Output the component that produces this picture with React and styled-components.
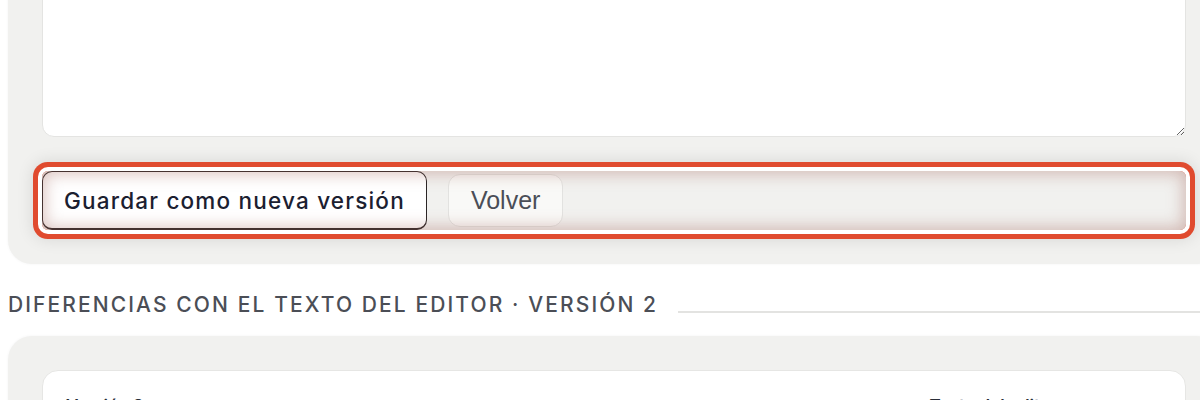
import styled, { createGlobalStyle } from "styled-components";

const GlobalStyle = createGlobalStyle`
  body {
    margin: 0;
    background: #ffffff;
    overflow: hidden;
    font-family: Inter, "Noto Sans", sans-serif;
  }
`;

export default function App() {
  return (
    <>
      <GlobalStyle />
      <Page>
        <Panel>
          <Editor defaultValue="" />
          <Actions>
            <PrimaryButton>Guardar como nueva versión</PrimaryButton>
            <GhostButton>Volver</GhostButton>
            <Highlight />
          </Actions>
        </Panel>

        <SectionTitle>
          <span>Diferencias con el texto del editor · Versión 2</span>
          <Rule />
        </SectionTitle>

        <Panel>
          <DiffCard>
            <DiffHeader>
              <span>Versión 2</span>
              <span>Texto del editor</span>
            </DiffHeader>
          </DiffCard>
        </Panel>
      </Page>
    </>
  );
}

const Page = styled.div`
  width: 1212px;
  margin-top: -137px;
  padding-left: 8px;
`;

const Panel = styled.section`
  background: #f1f1ef;
  border-radius: 24px;
  padding: 34px;
  display: flex;
  flex-direction: column;
  gap: 34px;
  box-shadow: 0 0 3px rgba(0, 0, 0, 0.05);
`;

const Editor = styled.textarea`
  display: block;
  box-sizing: border-box;
  width: 100%;
  height: 240px;
  background: #ffffff;
  border: 1px solid #e4e4e2;
  border-radius: 12px;
  resize: vertical;
  outline: none;
`;

const Actions = styled.div`
  position: relative;
  display: flex;
  align-items: center;
  gap: 21px;
  height: 59px;
`;

// annotation ring drawn over the action row
const Highlight = styled.div`
  position: absolute;
  inset: 0;
  border-radius: 6px;
  pointer-events: none;
  box-shadow:
    inset 0 0 16px 3px rgba(160, 95, 85, 0.38),
    0 0 0 4px #ffffff,
    0 0 0 9px #e04b2f,
    0 0 16px 10px rgba(0, 0, 0, 0.1);
`;

const PrimaryButton = styled.button`
  box-sizing: border-box;
  height: 59px;
  padding: 0 21px;
  background: #ffffff;
  border: 1px solid #2a2526;
  border-bottom-width: 2px;
  border-radius: 10px;
  font-family: Inter, "Noto Sans", sans-serif;
  font-size: 22.5px;
  font-weight: 500;
  letter-spacing: 1.2px;
  color: #1b2030;
`;

const GhostButton = styled.button`
  box-sizing: border-box;
  height: 53px;
  padding: 0 22px;
  background: #f9f9f7;
  border: 1px solid #e2e2e0;
  border-radius: 12px;
  font-family: "Liberation Sans", Arial, sans-serif;
  font-size: 25px;
  color: #4a4e57;
`;

const SectionTitle = styled.h2`
  display: flex;
  align-items: flex-end;
  gap: 20px;
  margin: 28px 0 19px;
  font-size: 21px;
  line-height: 25px;
  font-weight: 500;
  letter-spacing: 2.1px;
  text-transform: uppercase;
  color: #4b4e56;
  white-space: nowrap;
`;

const Rule = styled.div`
  flex: 1;
  height: 2px;
  margin-bottom: 4px;
  background: #e3e3e1;
`;

const DiffCard = styled.div`
  background: #ffffff;
  border: 1px solid #e6e6e4;
  border-radius: 16px;
  padding: 25px 128px 24px 23px;
  min-height: 120px;
`;

const DiffHeader = styled.div`
  display: flex;
  justify-content: space-between;
  font-size: 17px;
  font-weight: 600;
  color: #2a2e38;
`;
